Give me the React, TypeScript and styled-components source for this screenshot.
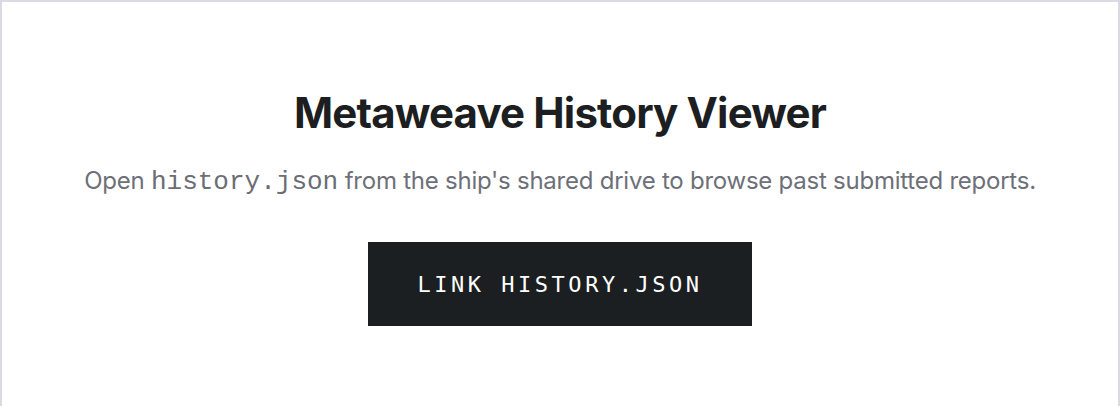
import styled, { createGlobalStyle } from "styled-components";

const GlobalStyle = createGlobalStyle`
  html, body {
    margin: 0;
    padding: 0;
    background: #ffffff;
  }
  * {
    box-sizing: border-box;
  }
`;

const Panel = styled.section`
  width: 1120px;
  min-height: 440px;
  border: 2px solid #dadae2;
  background: #ffffff;
  display: flex;
  flex-direction: column;
  align-items: center;
  padding-top: 86px;
  font-family: Inter, "Liberation Sans", sans-serif;
`;

const Title = styled.h1`
  margin: 0;
  font-size: 42px;
  line-height: 50px;
  font-weight: 700;
  letter-spacing: -0.02em;
  color: #1c1e21;
`;

const Subtitle = styled.p`
  margin: 27px 0 0;
  font-size: 24px;
  line-height: 32px;
  color: #6d7078;
  letter-spacing: -0.01em;
`;

const Code = styled.code`
  font-family: "Liberation Mono", monospace;
  font-size: 26px;
  color: #6a6d74;
  letter-spacing: 0;
`;

const LinkButton = styled.button`
  margin-top: 44px;
  width: 384px;
  height: 84px;
  border: none;
  background: #1c1f22;
  color: #ffffff;
  font-family: "DejaVu Sans Mono", monospace;
  font-size: 22px;
  letter-spacing: 0.16em;
  text-transform: uppercase;
  cursor: pointer;
`;

export default function App() {
  return (
    <>
      <GlobalStyle />
      <Panel>
        <Title>Metaweave History Viewer</Title>
        <Subtitle>
          Open <Code>history.json</Code> from the ship's shared drive to browse
          past submitted reports.
        </Subtitle>
        <LinkButton>Link history.json</LinkButton>
      </Panel>
    </>
  );
}
